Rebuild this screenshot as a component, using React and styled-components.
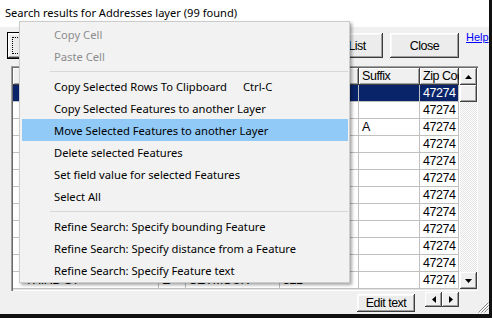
import React from 'react';
import styled, { createGlobalStyle } from 'styled-components';

const GlobalStyle = createGlobalStyle`
  html, body { margin: 0; padding: 0; background: #111; }
  * { box-sizing: border-box; }
`;

const UI_FONT = '"Noto Sans", "Open Sans", sans-serif';
const GRID_FONT = '"Liberation Sans", Arial, sans-serif';

// Window frame with the dark edge on the right and bottom
const Window = styled.div`
  position: relative;
  width: 489px;
  height: 314px;
  background: #f0f0f0;
  display: flex;
  flex-direction: column;
`;

const TitleBar = styled.div`
  height: 27px;
  background: #fff;
  padding: 5px 0 0 5px;
  font-family: ${UI_FONT};
  font-size: 11.1px;
  color: #000;
`;

const Toolbar = styled.div`
  height: 39px;
  display: flex;
  align-items: flex-start;
  padding: 6px 0 0 8px;
`;

const ClassicButton = styled.button`
  height: ${({ h }) => h || 25}px;
  width: ${({ w }) => w}px;
  margin-left: ${({ ml }) => ml || 0}px;
  margin-top: ${({ mt }) => mt || 0}px;
  padding: 0;
  border: none;
  background: #ececec;
  font-family: ${GRID_FONT};
  font-size: 12.5px;
  letter-spacing: -0.5px;
  color: #000;
  white-space: nowrap;
  box-shadow: inset -1px -1px #3c3c3c, inset 1px 1px #fff, inset -2px -2px #a0a0a0, inset 2px 2px #f8f8f8;
  outline: ${({ focused }) => (focused ? '1px solid #000' : 'none')};
  position: relative;

  &::after {
    content: '';
    display: ${({ focused }) => (focused ? 'block' : 'none')};
    position: absolute;
    inset: 4px;
    border: 1px dotted #000;
  }
`;

const HelpLink = styled.a`
  margin-left: 7px;
  margin-top: -2px;
  font-family: "Liberation Sans", Arial, sans-serif;
  font-size: 11px;
  color: #0000ff;
  text-decoration: underline;
`;

const GridFrame = styled.div`
  margin-left: 11px;
  width: 467px;
  height: 225px;
  padding: 2px;
  display: flex;
  background: #fff;
  box-shadow: inset 1px 1px #a0a0a0, inset 2px 2px #696969, inset -1px -1px #fff, inset -2px -2px #e3e3e3;
`;

const Table = styled.div`
  display: grid;
  grid-template-columns: 146px 27px 94px 79px 61px 39px;
  grid-auto-rows: 17px;
  width: 446px;
  align-content: start;
  font-family: ${GRID_FONT};
  font-size: 12.5px;
  letter-spacing: -0.45px;
`;

const HeaderCell = styled.div`
  background: #f0f0f0;
  padding: 0 3px 0 ${({ indent }) => indent || 3}px;
  line-height: 17px;
  white-space: nowrap;
  overflow: hidden;
  box-shadow: inset -1px -1px #404040, inset 1px 1px #fff, inset -2px -2px #a0a0a0;
`;

const Cell = styled.div`
  padding: 0 3px 0 ${({ indent }) => indent || 3}px;
  line-height: 16px;
  white-space: nowrap;
  overflow: hidden;
  border-right: 1px solid #c0c0c0;
  border-bottom: 1px solid #c0c0c0;
  background: ${({ selected }) => (selected ? '#0a246a' : '#fff')};
  color: ${({ selected }) => (selected ? '#fff' : '#000')};
`;

const ScrollBar = styled.div`
  width: 17px;
  display: flex;
  flex-direction: column;
  margin-left: 1px;
`;

const ScrollTrack = styled.div`
  flex: 1;
  background: repeating-conic-gradient(#fff 0 25%, #e4e4e4 0 50%) 0 0 / 2px 2px;
`;

const ArrowButton = styled.div`
  width: 17px;
  height: ${({ h }) => h || 17}px;
  background: #f0f0f0;
  display: flex;
  align-items: center;
  justify-content: center;
  box-shadow: inset -1px -1px #404040, inset 1px 1px #fff, inset -2px -2px #a0a0a0;
`;

const Footer = styled.div`
  flex: 1;
  display: flex;
  align-items: flex-start;
  padding-left: 357px;
`;

const SpinPair = styled.div`
  display: flex;
  margin-left: 10px;
  margin-top: 1px;
`;

const Grip = styled.svg`
  margin-left: 19px;
  margin-top: 11px;
`;

// Context menu that floats over the dialog
const Menu = styled.div`
  position: absolute;
  left: 19px;
  top: 21px;
  width: 331px;
  padding: 1px 1px 1px 2px;
  background: #f2f2f2;
  border: 1px solid #cccccc;
  box-shadow: 2px 2px 3px rgba(0, 0, 0, 0.35);
  font-family: ${UI_FONT};
  font-size: 11.2px;
`;

const MenuItem = styled.div`
  height: 22px;
  display: flex;
  align-items: center;
  padding-left: 32px;
  background: ${({ active }) => (active ? '#91c9f7' : 'transparent')};
  color: ${({ disabled }) => (disabled ? '#8c8c8c' : '#000')};
  white-space: nowrap;
`;

const ItemLabel = styled.span`
  flex: 0 0 189px;
`;

const Separator = styled.div`
  height: 8px;
  display: flex;
  align-items: center;
  padding-left: 28px;

  &::before {
    content: '';
    flex: 1;
    height: 1px;
    background: #d7d7d7;
  }
`;

const Tri = ({ dir }) => {
  const pts = {
    up: '0,4 7,4 3.5,0',
    down: '0,0 7,0 3.5,4',
    left: '4,0 4,7 0,3.5',
    right: '0,0 0,7 4,3.5',
  }[dir];
  const vertical = dir === 'up' || dir === 'down';
  return (
    <svg width={vertical ? 7 : 4} height={vertical ? 4 : 7}>
      <polygon points={pts} fill="#000" />
    </svg>
  );
};

const columns = ['Street Name', 'Dir', 'City', 'Number', 'Suffix', 'Zip Code'];

const rows = [
  ['MAIN ST', 'N', 'SEYMOUR', '101', '', '47274'],
  ['MAIN ST', 'S', 'SEYMOUR', '118', '', '47274'],
  ['WALNUT ST', 'W', 'SEYMOUR', '204', 'A', '47274'],
  ['CHESTNUT ST', 'N', 'SEYMOUR', '215', '', '47274'],
  ['BROADWAY ST', 'E', 'SEYMOUR', '230', '', '47274'],
  ['TIPTON ST', 'W', 'SEYMOUR', '242', '', '47274'],
  ['POPLAR ST', 'S', 'SEYMOUR', '257', '', '47274'],
  ['SECOND ST', 'E', 'SEYMOUR', '263', '', '47274'],
  ['SECOND ST', 'W', 'SEYMOUR', '278', '', '47274'],
  ['THIRD ST', 'W', 'SEYMOUR', '290', '', '47274'],
  ['THIRD ST', 'E', 'SEYMOUR', '305', '', '47274'],
  ['THIRD ST', 'E', 'SEYMOUR', '321', '', '47274'],
];

const menuItems = [
  { label: 'Copy Cell', disabled: true },
  { label: 'Paste Cell', disabled: true },
  { sep: true },
  { label: 'Copy Selected Rows To Clipboard', shortcut: 'Ctrl-C' },
  { label: 'Copy Selected Features to another Layer' },
  { label: 'Move Selected Features to another Layer', active: true },
  { label: 'Delete selected Features' },
  { label: 'Set field value for selected Features' },
  { label: 'Select All' },
  { sep: true },
  { label: 'Refine Search: Specify bounding Feature' },
  { label: 'Refine Search: Specify distance from a Feature' },
  { label: 'Refine Search: Specify Feature text' },
];

function App() {
  return (
    <>
      <GlobalStyle />
      <Window>
        <TitleBar>Search results for Addresses layer (99 found)</TitleBar>
        <Toolbar>
          <ClassicButton w={80} focused>Zoom To</ClassicButton>
          <ClassicButton w={100} ml={7}>Select on Map</ClassicButton>
          <ClassicButton w={96} ml={7}>Export</ClassicButton>
          <ClassicButton w={78} ml={7}>Print List</ClassicButton>
          <ClassicButton w={69} ml={7}>Close</ClassicButton>
          <HelpLink href="#">Help</HelpLink>
        </Toolbar>
        <GridFrame>
          <Table>
            {columns.map((c, j) => (
              <HeaderCell key={j} indent={j === 0 ? 12 : 3}>{c}</HeaderCell>
            ))}
            {rows.map((r, i) =>
              r.map((v, j) => (
                <Cell key={`${i}-${j}`} selected={i === 0} indent={j === 0 ? 12 : 3}>
                  {v}
                </Cell>
              ))
            )}
          </Table>
          <ScrollBar>
            <ArrowButton><Tri dir="up" /></ArrowButton>
            <ArrowButton />
            <ScrollTrack />
            <ArrowButton><Tri dir="down" /></ArrowButton>
          </ScrollBar>
        </GridFrame>
        <Footer>
          <ClassicButton w={58} h={18} mt={3}>Edit text</ClassicButton>
          <SpinPair>
            <ArrowButton h={15}><Tri dir="left" /></ArrowButton>
            <ArrowButton h={15}><Tri dir="right" /></ArrowButton>
          </SpinPair>
          <Grip width="11" height="11" viewBox="0 0 11 11">
            <g stroke="#808080" strokeWidth="1">
              <line x1="10.5" y1="0.5" x2="0.5" y2="10.5" />
              <line x1="10.5" y1="3.5" x2="3.5" y2="10.5" />
              <line x1="10.5" y1="6.5" x2="6.5" y2="10.5" />
            </g>
            <g stroke="#fff" strokeWidth="1">
              <line x1="10.5" y1="1.5" x2="1.5" y2="10.5" />
              <line x1="10.5" y1="4.5" x2="4.5" y2="10.5" />
              <line x1="10.5" y1="7.5" x2="7.5" y2="10.5" />
            </g>
          </Grip>
        </Footer>
        <Menu>
          {menuItems.map((m, i) =>
            m.sep ? (
              <Separator key={i} />
            ) : (
              <MenuItem key={i} disabled={m.disabled} active={m.active}>
                <ItemLabel>{m.label}</ItemLabel>
                {m.shortcut && <span>{m.shortcut}</span>}
              </MenuItem>
            )
          )}
        </Menu>
      </Window>
    </>
  );
}

export default App;
